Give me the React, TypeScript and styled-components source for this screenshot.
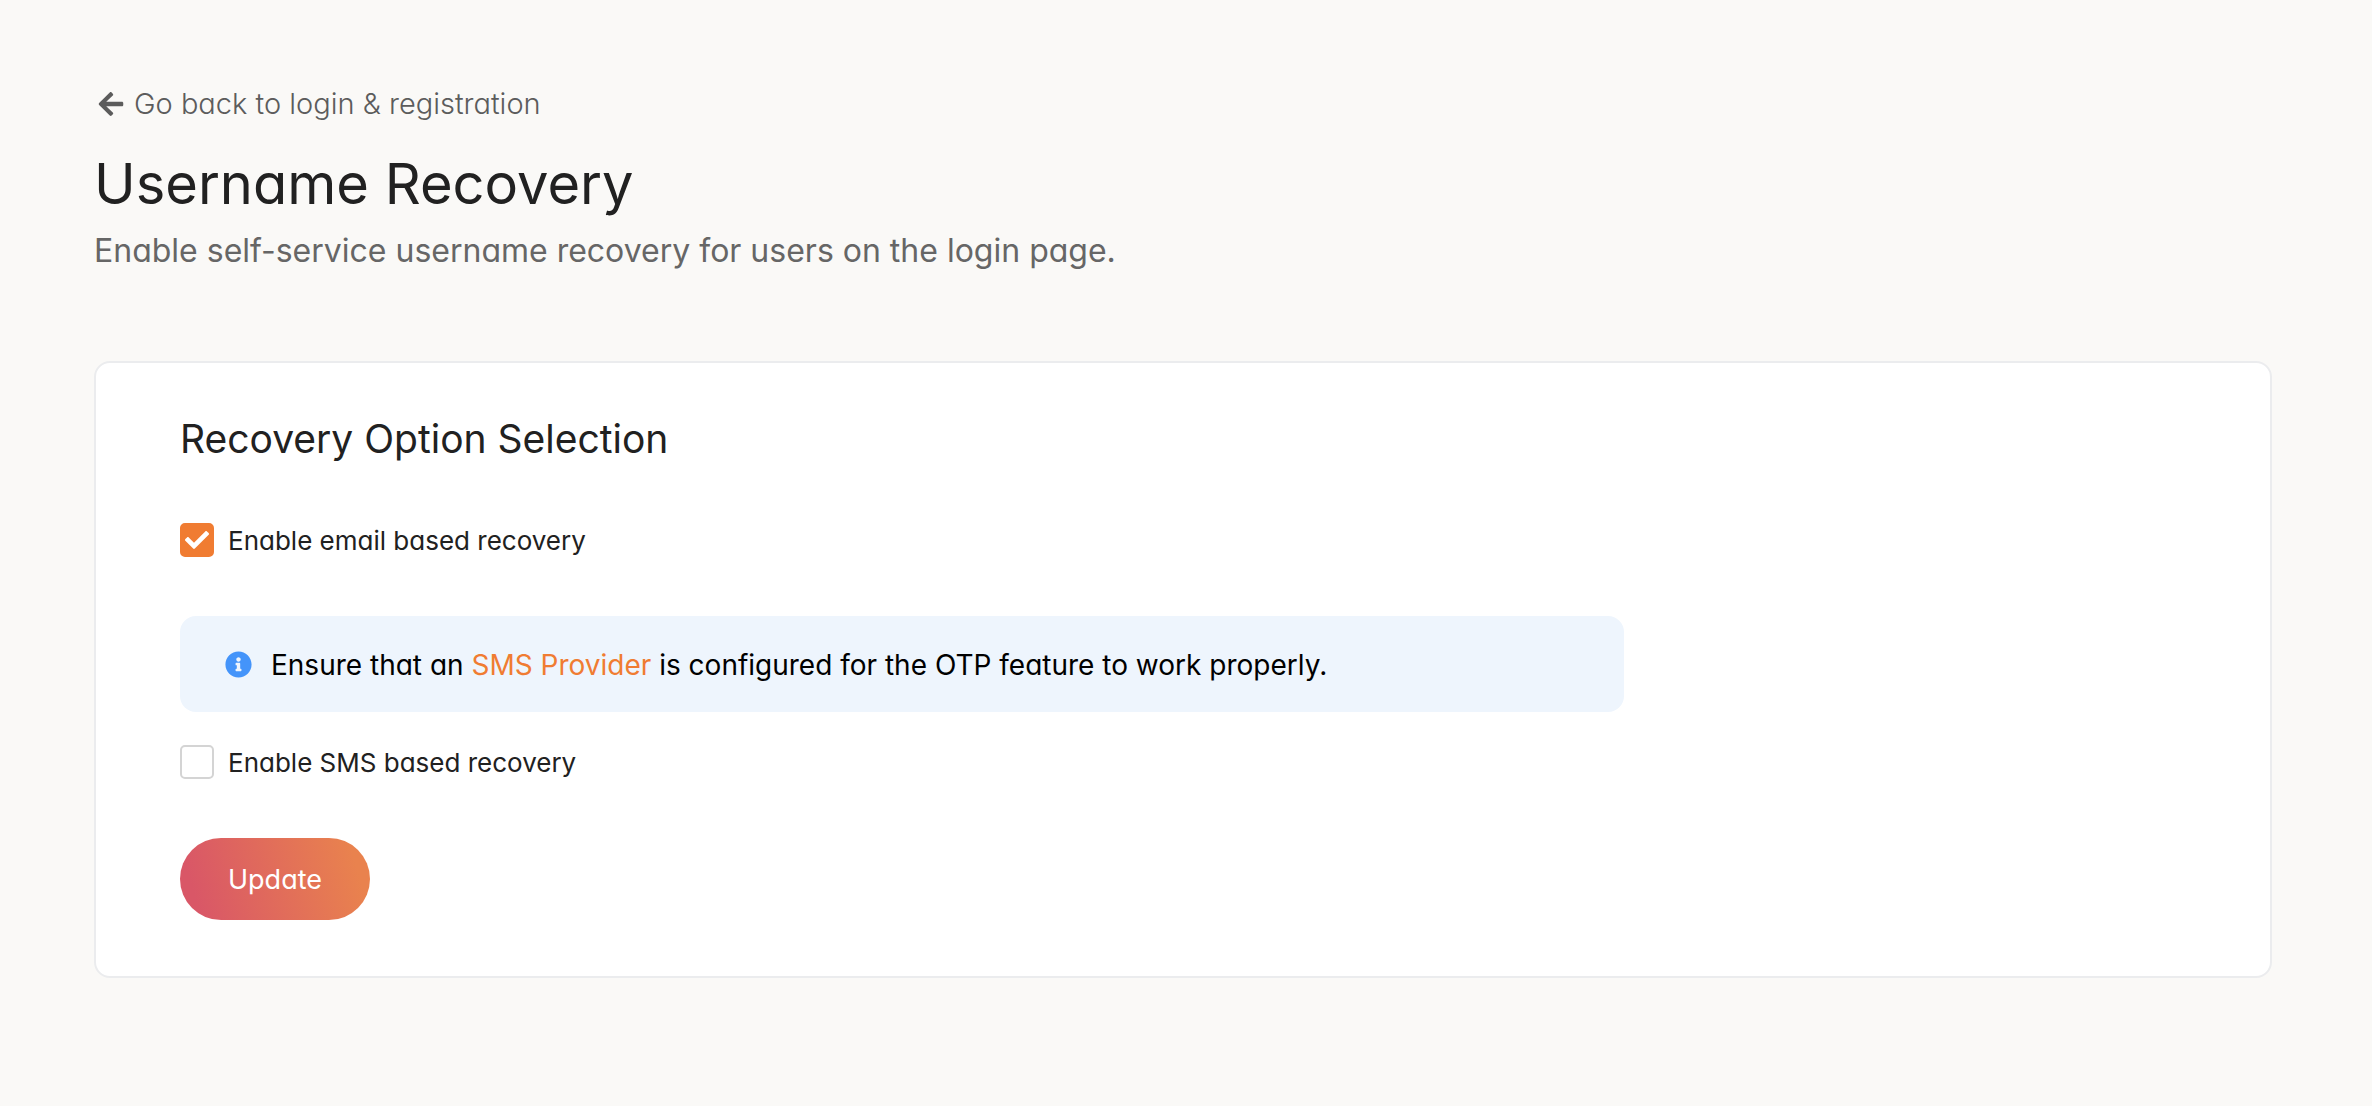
import React, { useState } from "react";
import styled, { createGlobalStyle } from "styled-components";
import { FaArrowLeft, FaCheck, FaInfoCircle } from "react-icons/fa";

const GlobalStyle = createGlobalStyle`
  *, *::before, *::after { box-sizing: border-box; }
  body {
    margin: 0;
    background: #faf9f7;
    color: #212121;
    font-family: Inter, "Liberation Sans", sans-serif;
    font-feature-settings: "cv11" 1;
    font-weight: 400;
  }
`;

const Page = styled.main`
  display: flex;
  flex-direction: column;
  padding: 84px 100px 84px 94px;
`;

const BackLink = styled.a`
  display: inline-flex;
  align-items: center;
  align-self: flex-start;
  gap: 9px;
  padding-left: 3px;
  color: #5c5c5c;
  font-size: 29px;
  font-weight: 300;
  line-height: 40px;
  text-decoration: none;
`;

const PageTitle = styled.h1`
  margin: 24px 0 0;
  font-size: 56px;
  font-weight: 400;
  line-height: 72px;
`;

const Subtitle = styled.p`
  margin: 7px 0 0;
  color: #666;
  font-size: 32px;
  line-height: 48px;
`;

const Card = styled.form`
  display: flex;
  flex-direction: column;
  align-items: flex-start;
  margin-top: 86px;
  padding: 52px 84px 56px;
  border: 2px solid #ebecee;
  border-radius: 16px;
  background: #fff;
`;

const SectionTitle = styled.h2`
  margin: 0 0 60px;
  font-size: 39px;
  font-weight: 400;
  line-height: 48px;
`;

const Option = styled.label`
  display: flex;
  align-items: center;
  gap: 14px;
  font-size: 26px;
  line-height: 34px;
  cursor: pointer;
`;

const OptionText = styled.span`
  padding-top: 2px;
  line-height: 32px;
`;

const BoxWrap = styled.span`
  display: grid;
  place-items: center;
  width: 34px;
  height: 34px;

  > * { grid-area: 1 / 1; }
  > svg { pointer-events: none; color: #fff; }
`;

const Box = styled.input`
  appearance: none;
  width: 34px;
  height: 34px;
  margin: 0;
  border: 2px solid #d4d4d4;
  border-radius: 5px;
  background: #fff;
  cursor: pointer;

  &:checked {
    border-color: #f07c32;
    background: #f07c32;
  }
`;

const Notice = styled.div`
  display: flex;
  align-items: center;
  gap: 19px;
  width: 72%;
  margin: 59px 0 33px;
  padding: 28px 45px;
  border-radius: 16px;
  background: #eef5fd;
  color: #000;
  font-size: 28px;
  line-height: 40px;

  > svg { flex: none; color: #4494fa; }
`;

const NoticeText = styled.p`
  margin: 0;
  padding-top: 2px;
  line-height: 38px;
`;

const InlineLink = styled.a`
  color: #f07c32;
  text-decoration: none;
`;

const SubmitButton = styled.button`
  min-width: 190px;
  margin-top: 59px;
  padding: 25px 48px 23px;
  border: 0;
  border-radius: 41px;
  background: linear-gradient(74deg, #d95767 10%, #e9824e 90%);
  color: #fff;
  font: inherit;
  font-feature-settings: inherit;
  font-size: 27px;
  line-height: 34px;
  cursor: pointer;
`;

type CheckOptionProps = {
  id: string;
  label: string;
  checked: boolean;
  onChange: (next: boolean) => void;
};

function CheckOption({ id, label, checked, onChange }: CheckOptionProps) {
  return (
    <Option htmlFor={id}>
      <BoxWrap>
        <Box
          id={id}
          type="checkbox"
          checked={checked}
          onChange={(e) => onChange(e.target.checked)}
        />
        {checked && <FaCheck size={24} aria-hidden />}
      </BoxWrap>
      <OptionText>{label}</OptionText>
    </Option>
  );
}

export default function App() {
  const [email, setEmail] = useState(true);
  const [sms, setSms] = useState(false);

  return (
    <>
      <GlobalStyle />
      <Page>
        <BackLink href="#login-registration">
          <FaArrowLeft size={28} aria-hidden />
          Go back to login &amp; registration
        </BackLink>
        <PageTitle>Username Recovery</PageTitle>
        <Subtitle>Enable self-service username recovery for users on the login page.</Subtitle>

        <Card onSubmit={(e) => e.preventDefault()}>
          <SectionTitle>Recovery Option Selection</SectionTitle>
          <CheckOption
            id="email-recovery"
            label="Enable email based recovery"
            checked={email}
            onChange={setEmail}
          />
          <Notice>
            <FaInfoCircle size={27} aria-hidden />
            <NoticeText>
              Ensure that an <InlineLink href="#sms-provider">SMS Provider</InlineLink> is
              configured for the OTP feature to work properly.
            </NoticeText>
          </Notice>
          <CheckOption
            id="sms-recovery"
            label="Enable SMS based recovery"
            checked={sms}
            onChange={setSms}
          />
          <SubmitButton type="submit">Update</SubmitButton>
        </Card>
      </Page>
    </>
  );
}
